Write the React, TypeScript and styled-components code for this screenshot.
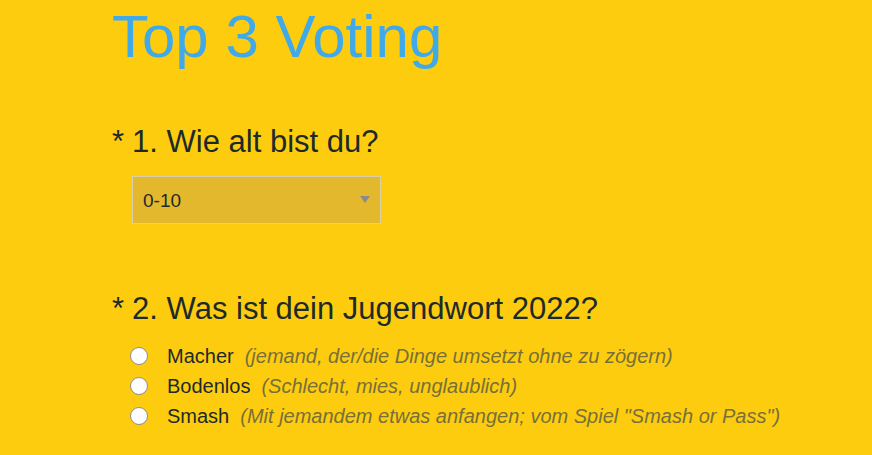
import { useState } from "react"
import styled, { createGlobalStyle } from "styled-components"

const GlobalStyle = createGlobalStyle`
  html, body {
    margin: 0;
    padding: 0;
    background: #fecc0f;
  }
  body {
    font-family: "Liberation Sans", Arial, sans-serif;
    color: #1c2a2c;
  }
`

type Option = {
  value: string
  label: string
  hint: string
}

const ageRanges = ["0-10", "11-15", "16-20", "21-30", "31+"]

const words: Option[] = [
  {
    value: "macher",
    label: "Macher",
    hint: "(jemand, der/die Dinge umsetzt ohne zu zögern)"
  },
  {
    value: "bodenlos",
    label: "Bodenlos",
    hint: "(Schlecht, mies, unglaublich)"
  },
  {
    value: "smash",
    label: "Smash",
    hint: '(Mit jemandem etwas anfangen; vom Spiel "Smash or Pass")'
  }
]

export default function App() {
  const [age, setAge] = useState(ageRanges[0])
  const [word, setWord] = useState("")

  return (
    <Page>
      <GlobalStyle />
      <Title>Top 3 Voting</Title>

      <Question>
        <QuestionTitle>
          <Required>*</Required>1. Wie alt bist du?
        </QuestionTitle>
        <SelectWrap>
          <Select value={age} onChange={(e) => setAge(e.target.value)}>
            {ageRanges.map((r) => (
              <option key={r} value={r}>
                {r}
              </option>
            ))}
          </Select>
          <Caret />
        </SelectWrap>
      </Question>

      <Question>
        <QuestionTitle>
          <Required>*</Required>2. Was ist dein Jugendwort 2022?
        </QuestionTitle>
        <Choices>
          {words.map((w) => (
            <Choice key={w.value}>
              <Radio
                type="radio"
                name="jugendwort"
                value={w.value}
                checked={word === w.value}
                onChange={() => setWord(w.value)}
              />
              <ChoiceLabel>{w.label}</ChoiceLabel>
              <Hint>{w.hint}</Hint>
            </Choice>
          ))}
        </Choices>
      </Question>
    </Page>
  )
}

const Page = styled.div`
  padding: 2px 0 0 112px;
`

const Title = styled.h1`
  margin: 0;
  font-size: 60px;
  font-weight: 400;
  line-height: 70px;
  color: #3fa9e9;
`

const Question = styled.section`
  margin-top: 52px;

  & + & {
    margin-top: 67px;
  }
`

const QuestionTitle = styled.h2`
  margin: 0;
  font-size: 31px;
  font-weight: 400;
  line-height: 35px;
`

const Required = styled.span`
  margin-right: 8px;
`

const SelectWrap = styled.div`
  position: relative;
  width: 249px;
  margin: 17px 0 0 20px;
`

const Select = styled.select`
  appearance: none;
  width: 100%;
  height: 48px;
  padding: 0 10px;
  border: 1px solid #d9cfa8;
  border-radius: 0;
  background: #e3b82d;
  font-family: inherit;
  font-size: 19px;
  color: #1c2a2c;
  outline: none;
`

const Caret = styled.span`
  position: absolute;
  right: 11px;
  top: 20px;
  width: 0;
  height: 0;
  border-left: 5px solid transparent;
  border-right: 5px solid transparent;
  border-top: 7px solid #8a8a8a;
  pointer-events: none;
`

const Choices = styled.div`
  display: flex;
  flex-direction: column;
  margin: 15px 0 0 18px;
`

const Choice = styled.label`
  display: flex;
  align-items: center;
  height: 30px;
`

const Radio = styled.input`
  appearance: none;
  width: 18px;
  height: 18px;
  margin: 0 19px 0 0;
  border: 1px solid #8d8d8d;
  border-radius: 50%;
  background: #fff;

  &:checked {
    background: radial-gradient(circle, #1c6fd1 0 4px, #fff 5px);
  }
`

const ChoiceLabel = styled.span`
  font-size: 20px;
  margin-right: 11px;
`

const Hint = styled.span`
  font-size: 20px;
  font-style: italic;
  color: #77703a;
`
